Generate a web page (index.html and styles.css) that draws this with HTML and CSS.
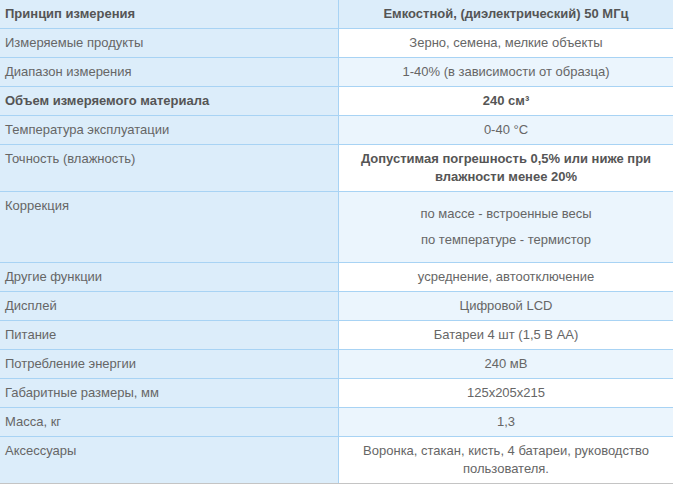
FILE: index.html
```html
<!DOCTYPE html>
<html lang="ru">
<head>
<meta charset="utf-8">
<title>Характеристики</title>
<link rel="stylesheet" href="styles.css">
</head>
<body>
<table class="spec">
  <tbody>
    <tr class="head"><td class="k b">Принцип измерения</td><td class="v b">Емкостной, (диэлектрический) 50 МГц</td></tr>
    <tr class="odd"><td class="k">Измеряемые продукты</td><td class="v">Зерно, семена, мелкие объекты</td></tr>
    <tr class="even"><td class="k">Диапазон измерения</td><td class="v">1-40% (в зависимости от образца)</td></tr>
    <tr class="odd"><td class="k b">Объем измеряемого материала</td><td class="v b">240 см³</td></tr>
    <tr class="even"><td class="k">Температура эксплуатации</td><td class="v">0-40 °C</td></tr>
    <tr class="odd"><td class="k">Точность (влажность)</td><td class="v b">Допустимая погрешность 0,5% или ниже при влажности менее 20%</td></tr>
    <tr class="even"><td class="k">Коррекция</td><td class="v"><p>по массе - встроенные весы</p><p>по температуре - термистор</p></td></tr>
    <tr class="odd"><td class="k">Другие функции</td><td class="v">усреднение, автоотключение</td></tr>
    <tr class="even"><td class="k">Дисплей</td><td class="v">Цифровой LCD</td></tr>
    <tr class="odd"><td class="k">Питание</td><td class="v">Батареи 4 шт (1,5 В АА)</td></tr>
    <tr class="even"><td class="k">Потребление энергии</td><td class="v">240 мВ</td></tr>
    <tr class="odd"><td class="k">Габаритные размеры, мм</td><td class="v">125x205x215</td></tr>
    <tr class="even"><td class="k">Масса, кг</td><td class="v">1,3</td></tr>
    <tr class="odd last"><td class="k">Аксессуары</td><td class="v">Воронка, стакан, кисть, 4 батареи, руководство пользователя.</td></tr>
  </tbody>
</table>
</body>
</html>
```

FILE: styles.css
```css
html, body {
  margin: 0;
  padding: 0;
  background: #ffffff;
}

.spec {
  width: 673px;
  border-collapse: collapse;
  table-layout: fixed;
  font-family: "Liberation Sans", Arial, sans-serif;
  font-size: 13px;
  line-height: 18px;
  color: #666666;
}

.spec td {
  padding: 5px 5px;
  vertical-align: top;
  border-bottom: 1px solid #a8d3f4;
}

.spec .k {
  width: 328px;
  background: #dcedfa;
  border-right: 1px solid #a8d3f4;
  text-align: left;
}

.spec .v {
  text-align: center;
}

.spec .b {
  font-weight: bold;
  color: #555555;
}

.spec .head .v {
  background: #dcedfa;
}

.spec .odd .v {
  background: #ffffff;
}

.spec .even .v {
  background: #ebf5fd;
}

.spec .last td {
  border-bottom: 1px solid #c4c4c4;
}

.spec p {
  margin: 8px 0;
}
```
